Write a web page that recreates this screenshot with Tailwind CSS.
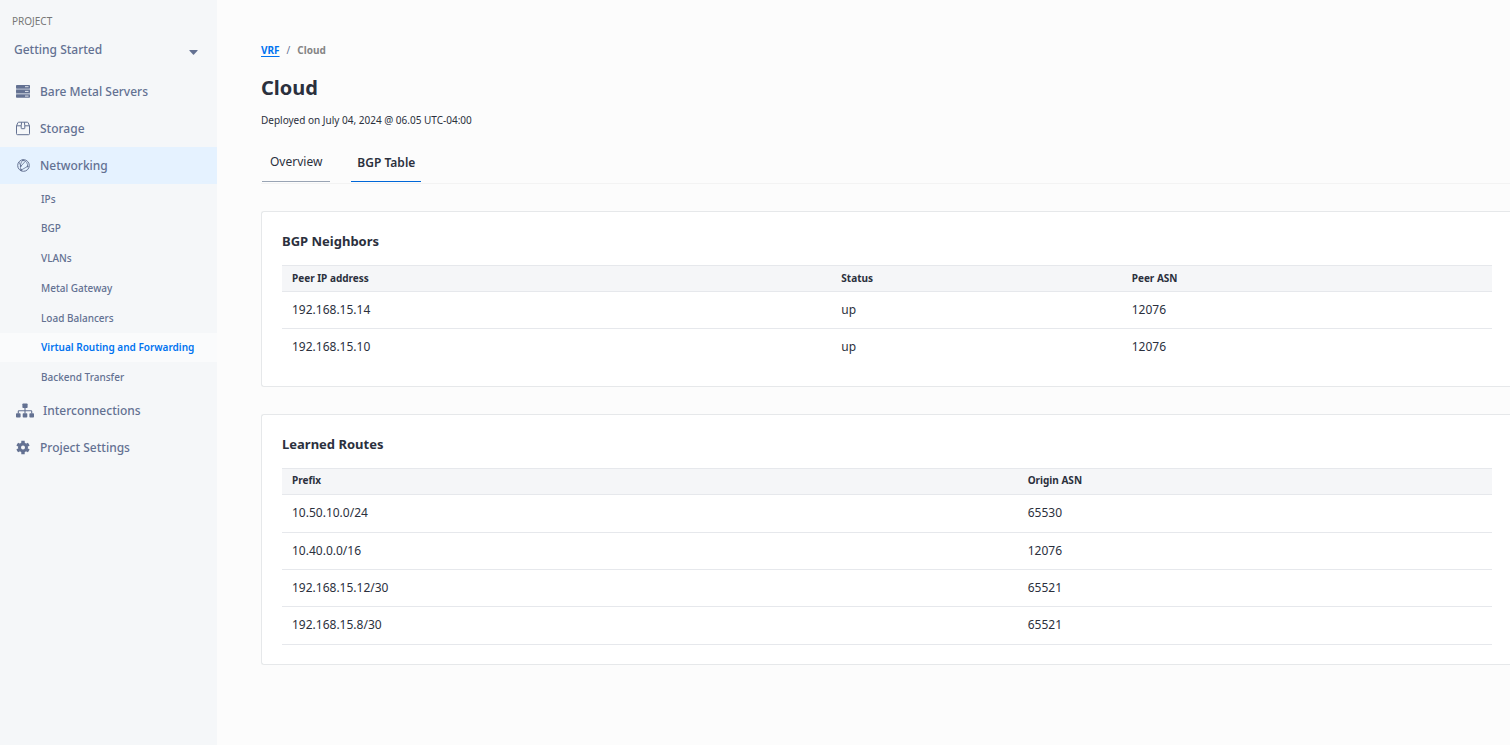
<!DOCTYPE html>
<html lang="en">
<head>
<meta charset="utf-8">
<meta name="viewport" content="width=device-width, initial-scale=1">
<title>Cloud – BGP Table</title>
<script src="https://cdn.jsdelivr.net/npm/@tailwindcss/browser@4"></script>
</head>
<body class="flex min-h-screen overflow-x-hidden bg-[#fcfcfc] font-['Noto_Sans',sans-serif] text-[#2b303d]">
<aside class="w-[217px] shrink-0 bg-[#f5f7f9] text-xs font-medium text-[#637192]">
  <p class="px-3 pt-3 text-[10px] leading-[18px] font-normal text-[#777]">PROJECT</p>
  <button type="button" class="flex h-10 w-full items-center justify-between pr-[19px] pl-3.5 font-medium">
    <span>Getting Started</span>
    <svg class="mt-1 h-[5px] w-[9px]" viewBox="0 0 9 5" fill="currentColor" aria-hidden="true"><path d="M.8 0h7.4q.8.2.3.8L5 4.6q-.5.5-1 0L.5.8Q0 .2.8 0z"/></svg>
  </button>
  <nav class="pt-[3px]" aria-label="Project">
    <a href="#" class="flex h-[37px] items-center gap-[9px] pl-4">
      <svg class="size-[15px]" viewBox="0 0 15 15" aria-hidden="true"><path fill="#aeb7c8" d="M0 2h14v11H0z"/><g fill="currentColor"><rect x="0" y="1" width="14" height="3.4" rx=".8"/><rect x="0" y="5.7" width="14" height="3.4" rx=".8"/><rect x="0" y="10.4" width="14" height="3.4" rx=".8"/></g><path stroke="#dfe4ec" d="M9 2.7h3.500M9 7.400h3.500M9 12.100h3.500"/></svg>
      Bare Metal Servers</a>
    <a href="#" class="flex h-[37px] items-center gap-[9px] pl-4">
      <svg class="size-[15px]" viewBox="0 0 15 15" fill="none" stroke="currentColor" stroke-linejoin="round" aria-hidden="true"><path d="M2.7 1.2h8.6q.6 0 .8.5l1.4 3.1v7.9q0 1-1 1h-11q-1 0-1-1V4.8l1.4-3.1q.2-.5.8-.5zM.5 4.8h4.7m3.6 0h4.7M5.6 1.2l-.4 3.600v2.400q0 .5.5.5h2.600q.5 0 .5-.5V4.800l-.4-3.600"/></svg>
      Storage</a>
    <a href="#" aria-current="true" class="flex h-[37px] items-center gap-[9px] bg-[#e5f2ff] pl-4">
      <svg class="size-[15px]" viewBox="0 0 15 15" fill="none" stroke="currentColor" aria-hidden="true"><circle cx="7.5" cy="7.5" r="5.8"/><g stroke-width=".8"><path d="M7 2C4.5 4 3.8 8 5 12.6M7 2c3.5 1.2 4.8 3.6 4.6 6.4M5 8.1l4.3-4.8M5 12.2l6.6-3.8M3 4.200l2 3.900"/></g><g fill="currentColor" stroke="none"><circle cx="7" cy="2.3" r=".9"/><circle cx="4.7" cy="8.1" r=".9"/><circle cx="11.6" cy="8.4" r=".9"/><circle cx="5.2" cy="12" r=".9"/></g></svg>
      Networking</a>
    <ul class="flex h-52 flex-col text-[10px]">
      <li class="flex flex-1"><a href="#" class="flex flex-1 items-center pt-px pl-[41px]">IPs</a></li>
      <li class="flex flex-1"><a href="#" class="flex flex-1 items-center pt-px pl-[41px]">BGP</a></li>
      <li class="flex flex-1"><a href="#" class="flex flex-1 items-center pt-px pl-[41px]">VLANs</a></li>
      <li class="flex flex-1"><a href="#" class="flex flex-1 items-center pt-px pl-[41px]">Metal Gateway</a></li>
      <li class="flex flex-1"><a href="#" class="flex flex-1 items-center pt-px pl-[41px]">Load Balancers</a></li>
      <li class="flex flex-1"><a href="#" aria-current="page" class="flex flex-1 items-center bg-[#fafbfc] pt-px pl-[41px] font-semibold text-[#0073f0]">Virtual Routing and Forwarding</a></li>
      <li class="flex flex-1"><a href="#" class="flex flex-1 items-center pt-px pl-[41px]">Backend Transfer</a></li>
    </ul>
    <a href="#" class="flex h-[37px] items-center gap-[9px] pl-4">
      <svg class="h-[15px] w-[18px]" viewBox="0 0 18 15" fill="currentColor" aria-hidden="true"><rect x="6.4" y=".5" width="5.2" height="4.5" rx=".8"/><rect x="0" y="10.2" width="4.6" height="4.3" rx=".8"/><rect x="6.7" y="10.2" width="4.6" height="4.3" rx=".8"/><rect x="13.4" y="10.2" width="4.6" height="4.3" rx=".8"/><path fill="none" stroke="currentColor" stroke-width="1.1" d="M9 4.5v6M2.3 10.5V8.3q0-.6.6-.6h12.2q.6 0 .6.6v2.2"/></svg>
      Interconnections</a>
    <a href="#" class="flex h-[37px] items-center gap-[9px] pl-4">
      <svg class="size-[15px]" viewBox="0 0 15 15" aria-hidden="true"><circle cx="7" cy="7.500" r="3.500" fill="none" stroke="currentColor" stroke-width="3"/><g fill="none" stroke="currentColor" stroke-width="3.400"><path d="M7 .8v2.400M7 11.800v2.400M1.200 4.150l2 1.150M10.800 9.700l2 1.150M1.200 10.850l2-1.150M10.800 5.300l2-1.150"/></g></svg>
      Project Settings</a>
  </nav>
</aside>

<main class="min-w-0 flex-1 pt-10 pl-11">
  <nav aria-label="Breadcrumb" class="flex h-5 items-center gap-[7px] text-[10px] font-bold text-[#858585]">
    <a href="#" class="text-[#0073f0] underline underline-offset-2">VRF</a><span class="font-normal text-[#637192]">/</span><span>Cloud</span>
  </nav>
  <h1 class="mt-3 text-xl leading-8 font-bold">Cloud</h1>
  <p class="mt-2 text-[10px] leading-4">Deployed on July 04, 2024 @ 06.05 UTC-04:00</p>
  <div role="tablist" class="mt-3.5 flex h-[42px] gap-[21px] border-b border-[#f3f3f3] pl-px text-xs">
    <button type="button" role="tab" aria-selected="false" class="h-10 border-b border-[#99a4b4] px-2">Overview</button>
    <button type="button" role="tab" aria-selected="true" class="h-10 border-b border-[#0067d8] px-1.5 pt-0.5 font-semibold">BGP Table</button>
  </div>

  <section class="mt-[27px] rounded-l-[3px] border border-r-0 border-[#e6e8ea] bg-white pt-5 pr-[18px] pb-5 pl-5">
    <h2 class="text-[13px] leading-[18px] font-bold">BGP Neighbors</h2>
    <table class="mt-[15px] w-full table-fixed text-left text-xs">
      <colgroup><col class="w-[45.4%]"><col class="w-[24%]"><col></colgroup>
      <thead class="bg-[#f5f6f8] text-[10px]">
        <tr class="h-[26px] border-y border-[#e6e8ec]"><th class="px-2.5 font-bold">Peer IP address</th><th class="px-2.5 font-bold">Status</th><th class="px-2.5 font-bold">Peer ASN</th></tr>
      </thead>
      <tbody>
        <tr class="h-[37px] border-b border-[#e6e8ec]"><td class="px-2.5">192.168.15.14</td><td class="px-2.5">up</td><td class="px-2.5">12076</td></tr>
        <tr class="h-[37px]"><td class="px-2.5">192.168.15.10</td><td class="px-2.5">up</td><td class="px-2.5">12076</td></tr>
      </tbody>
    </table>
  </section>

  <section class="mt-[27px] rounded-l-[3px] border border-r-0 border-[#e6e8ea] bg-white pt-5 pr-[18px] pb-[19px] pl-5">
    <h2 class="text-[13px] leading-[18px] font-bold">Learned Routes</h2>
    <table class="mt-[15px] w-full table-fixed text-left text-xs">
      <colgroup><col class="w-[60.8%]"><col></colgroup>
      <thead class="bg-[#f5f6f8] text-[10px]">
        <tr class="h-[26px] border-y border-[#e6e8ec]"><th class="px-2.5 font-bold">Prefix</th><th class="px-2.5 font-bold">Origin ASN</th></tr>
      </thead>
      <tbody>
        <tr class="h-[38px] border-b border-[#e6e8ec]"><td class="px-2.5">10.50.10.0/24</td><td class="px-2.5">65530</td></tr>
        <tr class="h-[37px] border-b border-[#e6e8ec]"><td class="px-2.5">10.40.0.0/16</td><td class="px-2.5">12076</td></tr>
        <tr class="h-[37px] border-b border-[#e6e8ec]"><td class="px-2.5">192.168.15.12/30</td><td class="px-2.5">65521</td></tr>
        <tr class="h-[38px] border-b border-[#e6e8ec]"><td class="px-2.5">192.168.15.8/30</td><td class="px-2.5">65521</td></tr>
      </tbody>
    </table>
  </section>
</main>
</body>
</html>
